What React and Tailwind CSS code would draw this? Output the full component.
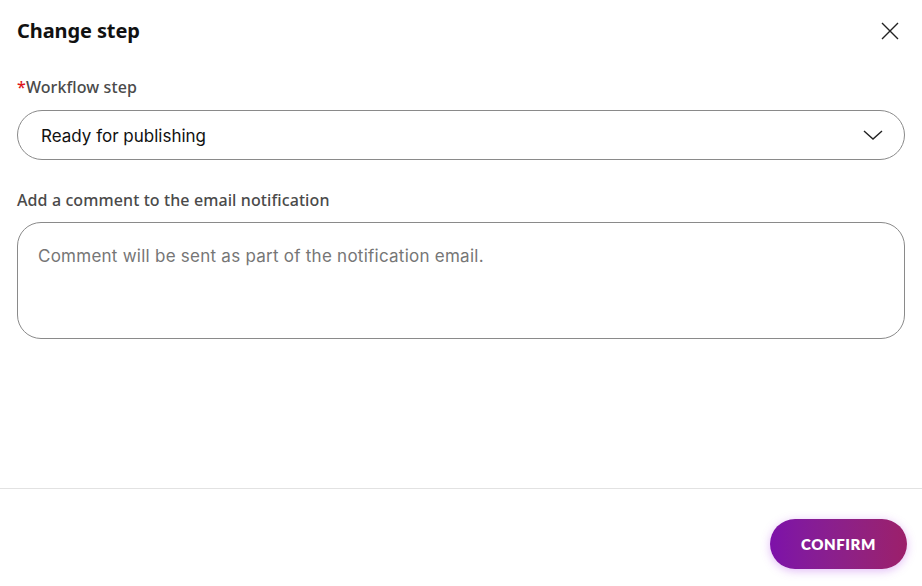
export default function App() {
  return (
    <div className="w-[922px] h-[586px] bg-white flex flex-col font-['Inter',sans-serif]">
      <div className="flex-1 px-[17px]">
        {/* Header */}
        <div className="flex items-center justify-between h-[62px]">
          <h2 className="text-[20px] font-bold text-[#111] tracking-[-0.1px] font-['Noto_Sans',sans-serif]">Change step</h2>
          <button className="mr-[6px] text-[#222]">
            <svg width="18" height="18" viewBox="0 0 18 18" fill="none" stroke="currentColor" strokeWidth="1.4">
              <path d="M1 1L17 17M17 1L1 17" />
            </svg>
          </button>
        </div>

        {/* Workflow step */}
        <label className="block mt-[14px] text-[16px] leading-[22px] tracking-[0.1px] text-[#4a4a4a] font-medium font-['Noto_Sans',sans-serif]">
          <span className="text-[#e0161b]">*</span>Workflow step
        </label>
        <div className="mt-[12px] h-[50px] border border-[#8a8a8a] rounded-full flex items-center justify-between pl-[23px] pr-[21px]">
          <span className="text-[17px] text-[#111] pt-[3px]">Ready for publishing</span>
          <svg width="20" height="10" viewBox="0 0 20 10" fill="none" stroke="#222" strokeWidth="1.4">
            <path d="M1 1L10 9L19 1" />
          </svg>
        </div>

        {/* Comment */}
        <label className="block mt-[29px] text-[16px] leading-[22px] tracking-[0.1px] text-[#4a4a4a] font-medium font-['Noto_Sans',sans-serif]">
          Add a comment to the email notification
        </label>
        <textarea
          placeholder="Comment will be sent as part of the notification email."
          className="mt-[11px] w-full h-[117px] border border-[#8a8a8a] rounded-[24px] px-[20px] py-[20px] text-[17px] leading-[26px] tracking-[0.25px] resize-none outline-none placeholder:text-[#767676]"
        />
      </div>

      {/* Footer */}
      <div className="border-t border-[#e2e2e2] h-[98px] flex items-start justify-end px-[15px] pt-[30px]">
        <button className="w-[137px] h-[50px] rounded-full bg-gradient-to-r from-[#7d10a9] to-[#9c1f6a] text-white text-[15px] font-extrabold tracking-[0.6px] font-['Lato',sans-serif] shadow-[0_2px_10px_rgba(170,60,230,0.35)]">
          CONFIRM
        </button>
      </div>
    </div>
  );
}
